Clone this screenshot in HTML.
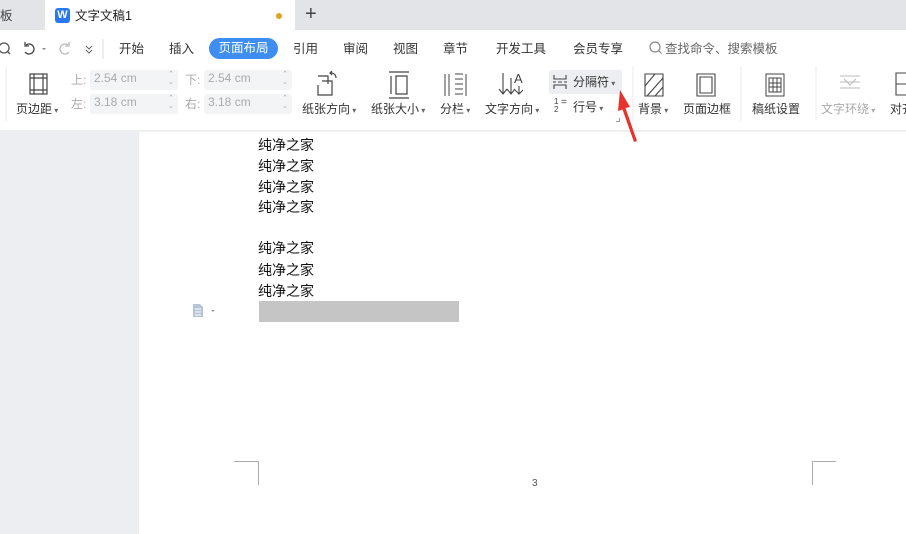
<!DOCTYPE html>
<html><head><meta charset="utf-8">
<style>
*{margin:0;padding:0;box-sizing:border-box}
body{width:906px;height:534px;overflow:hidden;position:relative;background:#fff;font-family:"Liberation Sans","Noto Sans CJK SC",sans-serif;font-size:12px;color:#333}
.a{position:absolute;white-space:nowrap}
.tabbar{left:0;top:0;width:906px;height:30px;background:#e3e4e7}
.tab{left:45px;top:0;width:250px;height:30px;background:#fff}
.menu{top:38px;font-size:12.5px;color:#333}
.lbl{font-size:12px;color:#333}
.g{color:#aaa}
.inp{background:#f3f4f6;border-radius:3px;height:20px;color:#aaa;font-size:12px;padding:1px 0 0 4px}
.sv{position:absolute}
.doc{left:0;top:130px;width:906px;height:404px;background:#fff}
.gut{left:0;top:130px;width:139px;height:404px;background:#eceef1}
.line{left:258px;font-size:14px;color:#111}
</style></head><body>
<div class="a tabbar"></div>
<div class="a" style="left:0;top:5px;font-size:12.5px;color:#444">板</div>
<div class="a tab"></div>
<div class="a" style="left:55px;top:8px;width:15px;height:15px;background:#2a78f0;border-radius:3px;color:#fff;font-size:11px;font-weight:bold;text-align:center;line-height:15px">W</div>
<div class="a" style="left:75px;top:5px;font-size:12.5px;color:#222">文字文稿1</div>
<div class="a" style="left:276px;top:13px;width:6px;height:6px;border-radius:3px;background:#e0a21c"></div>
<div class="a" style="left:305px;top:3px;font-size:20px;color:#444">+</div>

<svg class="sv" style="left:0;top:39px" width="110" height="20"><circle cx="4" cy="9" r="5" fill="none" stroke="#555" stroke-width="1.3"/><path d="M7 12l3 3" stroke="#555" stroke-width="1.3"/><path d="M26 6a5 5 0 1 1 -1 7M25 3v4h4" fill="none" stroke="#444" stroke-width="1.3"/><path d="M42 9l2 2 2-2" fill="#888"/><path d="M68 6a5 5 0 1 0 1 7M69 3v4h-4" fill="none" stroke="#bbb" stroke-width="1.3"/><path d="M86 7l3 3 3-3M86 11l3 3 3-3" fill="none" stroke="#666"/><path d="M103 0v20" stroke="#ddd"/></svg>
<div class="a menu" style="left:119px">开始</div>
<div class="a menu" style="left:169px">插入</div>
<div class="a" style="left:209px;top:38px;width:69px;height:21px;border-radius:11px;background:#3d8ef0;color:#fff;font-size:12.5px;text-align:center;line-height:20px">页面布局</div>
<div class="a menu" style="left:293px">引用</div>
<div class="a menu" style="left:343px">审阅</div>
<div class="a menu" style="left:393px">视图</div>
<div class="a menu" style="left:443px">章节</div>
<div class="a menu" style="left:496px">开发工具</div>
<div class="a menu" style="left:573px">会员专享</div>
<svg class="sv" style="left:649px;top:41px" width="14" height="14"><circle cx="6" cy="6" r="5" fill="none" stroke="#888" stroke-width="1.2"/><path d="M9.5 9.5l3 3" stroke="#888" stroke-width="1.2"/></svg>
<div class="a menu" style="left:665px;color:#666">查找命令、搜索模板</div>

<svg class="sv" style="left:0;top:66px" width="906" height="64" fill="none" stroke="#444" stroke-width="1.2">
<path d="M6 0v55" stroke="#eee"/>
<rect x="30" y="8" width="17" height="20"/><path d="M34 8v20M43 8v20M30 12h17M30 24h17"/>
<path d="M318 10h10v8M322 15h10v14h-14v-10" /><path d="M336 12a5 5 0 0 0 -6 -5M332 5l-2 2 2 2"/>
<path d="M389 6h20M389 32h20M391 10v18M396 10h11v18h-11z"/>
<path d="M445 8v22M449 8v22M455 8h8M455 13h8M455 18h8M455 23h8M455 28h8M466 8v22" stroke-width="1"/>
<path d="M503 7v20M499 23l4 5 4-5M511 12v15M507 23l4 5 4-5" stroke-width="1.1"/><text x="514" y="17" font-size="13" fill="#444" stroke="none" font-family="Liberation Sans">A</text><path d="M519 20v8M515 24l4 4 4-4" stroke-width="1.1"/>
<path d="M645 8h18v22h-18zM645 20l10-12M647 30l16-18M655 30l8-9" stroke-width="1.1"/>
<path d="M697 8h18v22h-18zM700 11h12v16h-12z" stroke-width="1.1"/>
<path d="M766 8h18v22h-18zM769 12h12v14h-12zM769 17h12M769 21h12M773 12v14M777 12v14" stroke-width="1"/>
<path d="M840 10h20M840 16h20M840 22h20M844 13l6 6 6-6" stroke="#bbb" stroke-width="1"/>
<path d="M896 7h12v22h-12zM896 18h12" stroke-width="1.1"/>
<path d="M633 0v55M741 0v55M816 0v55" stroke="#eee"/>
</svg>
<div class="a lbl" style="left:16px;top:100px">页边距<span style="font-size:8px;color:#666"> ▾</span></div>
<div class="a g" style="left:71px;top:71px">上:</div>
<div class="a inp" style="left:90px;top:70px;width:88px">2.54 cm<span style="position:absolute;right:4px;top:1px;font-size:7px;line-height:8px">⌃<br>⌄</span></div>
<div class="a g" style="left:71px;top:95px">左:</div>
<div class="a inp" style="left:90px;top:94px;width:88px">3.18 cm<span style="position:absolute;right:4px;top:1px;font-size:7px;line-height:8px">⌃<br>⌄</span></div>
<div class="a g" style="left:185px;top:71px">下:</div>
<div class="a inp" style="left:204px;top:70px;width:88px">2.54 cm<span style="position:absolute;right:4px;top:1px;font-size:7px;line-height:8px">⌃<br>⌄</span></div>
<div class="a g" style="left:185px;top:95px">右:</div>
<div class="a inp" style="left:204px;top:94px;width:88px">3.18 cm<span style="position:absolute;right:4px;top:1px;font-size:7px;line-height:8px">⌃<br>⌄</span></div>
<div class="a lbl" style="left:302px;top:100px">纸张方向<span style="font-size:8px;color:#666"> ▾</span></div>
<div class="a lbl" style="left:371px;top:100px">纸张大小<span style="font-size:8px;color:#666"> ▾</span></div>
<div class="a lbl" style="left:440px;top:100px">分栏<span style="font-size:8px;color:#666"> ▾</span></div>
<div class="a lbl" style="left:485px;top:100px">文字方向<span style="font-size:8px;color:#666"> ▾</span></div>
<div class="a" style="left:549px;top:70px;width:73px;height:24px;background:#eceef1;border-radius:2px"></div>
<svg class="sv" style="left:552px;top:74px" width="16" height="16" fill="none" stroke="#444" stroke-width="1.1"><path d="M2 1v4h12v-4M1 8h3M6 8h4M12 8h3M2 15v-4h12v4"/></svg>
<div class="a lbl" style="left:573px;top:73px">分隔符<span style="font-size:8px;color:#666"> ▾</span></div>
<div class="a" style="left:554px;top:98px;font-size:8px;line-height:8px;color:#444">1<br>2</div>
<div class="a" style="left:561px;top:97px;font-size:10px;color:#444">=</div>
<div class="a lbl" style="left:573px;top:98px">行号<span style="font-size:8px;color:#666"> ▾</span></div>
<div class="a lbl" style="left:638px;top:100px">背景<span style="font-size:8px;color:#666"> ▾</span></div>
<div class="a lbl" style="left:683px;top:100px">页面边框</div>
<div class="a lbl" style="left:752px;top:100px">稿纸设置</div>
<div class="a lbl" style="left:821px;top:100px;color:#aaa">文字环绕<span style="font-size:8px"> ▾</span></div>
<div class="a lbl" style="left:890px;top:100px">对齐</div>
<div class="a" style="left:616px;top:118px;width:4px;height:4px;border-right:1px solid #999;border-bottom:1px solid #999"></div>

<div class="a doc"></div>
<div class="a gut"></div>
<div class="a" style="left:139px;top:130px;width:767px;height:3px;background:linear-gradient(#e8e8e8,#fff)"></div>
<div class="a line" style="top:135px">纯净之家</div>
<div class="a line" style="top:156px">纯净之家</div>
<div class="a line" style="top:177px">纯净之家</div>
<div class="a line" style="top:197px">纯净之家</div>
<div class="a line" style="top:238px">纯净之家</div>
<div class="a line" style="top:260px">纯净之家</div>
<div class="a line" style="top:281px">纯净之家</div>
<div class="a" style="left:259px;top:301px;width:200px;height:21px;background:#c5c5c5"></div>
<svg class="sv" style="left:192px;top:303px" width="26" height="16"><path d="M1 1h7l3 3v10h-10z" fill="#b7c4d8"/><path d="M3 6h6M3 9h6M3 12h6" stroke="#fff"/><path d="M19 7l2 2 2-2" fill="#999"/></svg>
<div class="a" style="left:234px;top:461px;width:25px;height:1px;background:#aaa"></div>
<div class="a" style="left:258px;top:461px;width:1px;height:24px;background:#aaa"></div>
<div class="a" style="left:812px;top:461px;width:24px;height:1px;background:#aaa"></div>
<div class="a" style="left:812px;top:461px;width:1px;height:24px;background:#aaa"></div>
<div class="a" style="left:532px;top:478px;font-size:10px;color:#555">3</div>

<svg class="sv" style="left:610px;top:85px" width="40" height="62"><path d="M10 5 L20 22 L15.5 23 L27 56 L24 57 L12.5 24.5 L8 26 Z" fill="#e8322c"/></svg>
</body></html>
